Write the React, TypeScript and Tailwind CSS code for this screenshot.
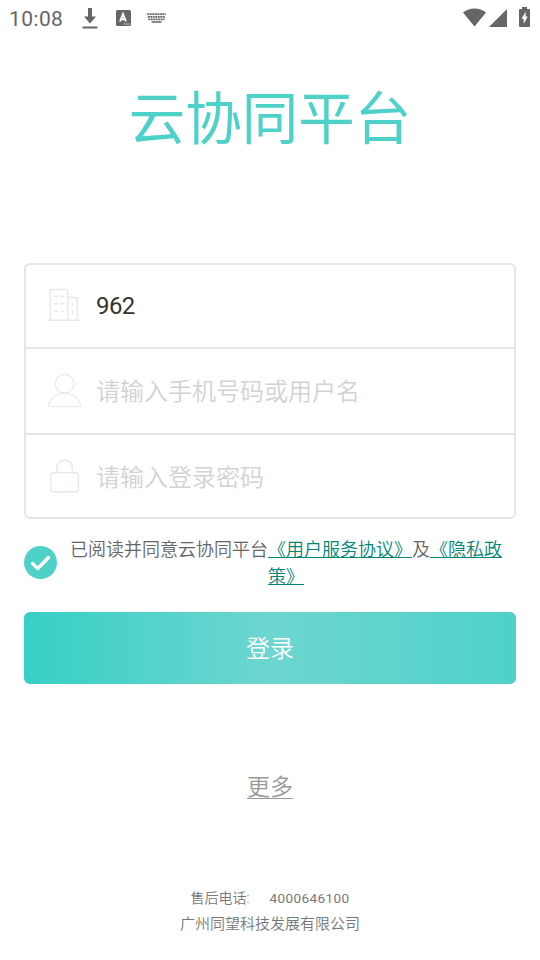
import type { ReactNode } from 'react';

function BuildingIcon() {
  return (
    <svg className="-ml-px mr-px -translate-y-px" width="34" height="34" viewBox="0 0 34 34" fill="none" stroke="#e4e9e9" strokeWidth="1.4">
      <path d="M3.2 32V3a1.5 1.5 0 0 1 1.5-1.5h14.6A1.5 1.5 0 0 1 20.8 3v29M20.8 9.5h8a1.5 1.5 0 0 1 1.5 1.5v21M0.8 32.2h32" />
      <path d="M7 8.3h4M13.5 8.3h4M7 15.7h4M13.5 15.7h4M7 23.3h4M13.5 23.3h4M25.5 14.5v4M25.5 22.500v4" />
    </svg>
  );
}

function UserIcon() {
  return (
    <svg width="34" height="34" viewBox="0 0 34 34" fill="none" stroke="#e4e9e9" strokeWidth="1.1">
      <circle cx="16.5" cy="9.8" r="9.3" />
      <path d="M0.5 32.5C1.5 24.500 8 19.300 16.500 19.300S31.500 24.500 32.700 32.500z" />
    </svg>
  );
}

function LockIcon() {
  return (
    <svg width="34" height="34" viewBox="0 0 34 34" fill="none" stroke="#e4e9e9" strokeWidth="1.4">
      <rect x="2.8" y="13.800" width="27.500" height="19" rx="2.500" />
      <path d="M8.800 13.800V9a7.800 7.800 0 0 1 15.600 0v4.800" />
    </svg>
  );
}

function StatusBar() {
  return (
    <div className="flex h-9 items-center pl-[9px] pr-2.5 text-[#666]">
      <span className="w-[73px] pt-0.5 text-[21px] leading-none tracking-[0.4px]">10:08</span>
      <svg className="mt-px" width="16" height="21" viewBox="0 0 16 21" fill="currentColor">
        <path d="M6 0h4v8.500h4L8 15.500 2 8.500h4zM0.500 18.500h15v2h-15z" />
      </svg>
      <svg className="ml-[18px]" width="15" height="16" viewBox="0 0 15 16">
        <rect width="15" height="16" rx="1.500" fill="currentColor" />
        <path d="M4 11.500 7 4l3 7.500M5.200 9.200h3.600" fill="none" stroke="#fff" strokeWidth="1.900" />
        <path d="M8 14h1.300M10.300 14h1.300M12.500 14h1.300" stroke="#fff" strokeWidth="1.200" />
      </svg>
      <svg className="ml-4" width="19" height="10" viewBox="0 0 19 10" fill="none" stroke="currentColor">
        <path d="M0.300 1.200h18.400M0.800 3.800h17.600M1.300 6.400h16.400" strokeWidth="1.800" strokeDasharray="1.900 0.600" />
        <path d="M4.500 9h10" strokeWidth="1.500" />
      </svg>
      <svg className="ml-auto -mt-px" width="23" height="19" viewBox="0 0 23 19" fill="currentColor">
        <path d="M0 4.500C6.500-1 16.500-1 23 4.500L11.500 18.500z" />
      </svg>
      <svg className="ml-[3px]" width="18" height="18" viewBox="0 0 18 18" fill="currentColor">
        <path d="M18 0v18H0z" />
      </svg>
      <svg className="ml-3 -mt-0.5" width="11" height="20" viewBox="0 0 11 20">
        <path d="M3 0h5v2h2a1 1 0 0 1 1 1v16a1 1 0 0 1-1 1H1a1 1 0 0 1-1-1V3a1 1 0 0 1 1-1h2z" fill="currentColor" />
        <path d="M6.800 4.500 2.500 11.800h2.200v5l4-7.300H6.500z" fill="#fff" />
      </svg>
    </div>
  );
}

function Field({ icon, children }: { icon: ReactNode; children: ReactNode }) {
  return (
    <div className="flex h-full items-center gap-3.5 pl-[22px] text-2xl">
      {icon}
      {children}
    </div>
  );
}

export default function App() {
  return (
    <div className="flex h-[960px] w-[540px] flex-col bg-white font-['Roboto','Noto_Sans_CJK_SC',sans-serif]">
      <StatusBar />

      <h1 className="mt-[42px] text-center text-[56.5px] leading-[84px] text-[#4ed1c9]">云协同平台</h1>

      <main className="mt-[101px] px-6">
        <div className="h-64 rounded-md border-2 border-[#e4e7e7]">
          <div className="h-[82px]">
            <Field icon={<BuildingIcon />}>
              <span className="tracking-[-0.6px] text-[#333]">962</span>
            </Field>
          </div>
          <div className="h-[88px] border-y-2 border-[#e4e7e7]">
            <Field icon={<UserIcon />}>
              <span className="pt-0.5 font-[350] text-[#d2d2d2]">请输入手机号码或用户名</span>
            </Field>
          </div>
          <div className="h-[82px]">
            <Field icon={<LockIcon />}>
              <span className="pt-1 font-[350] text-[#d2d2d2]">请输入登录密码</span>
            </Field>
          </div>
        </div>

        {/* Agreement */}
        <div className="mt-4 flex h-[54px] items-center">
          <svg className="shrink-0" width="33" height="33" viewBox="0 0 33 33">
            <circle cx="16.500" cy="16.500" r="16.500" fill="#4ed1c9" />
            <path d="m8.500 17.500 5.300 5 10.700-11" fill="none" stroke="#fff" strokeWidth="3.500" strokeLinecap="round" strokeLinejoin="round" />
          </svg>
          <p className="flex-1 pr-px pt-0.5 text-center text-lg leading-[27px] font-[350] text-[#666]">
            已阅读并同意云协同平台
            <a className="text-[#008577] underline decoration-1 underline-offset-1">《用户服务协议》</a>
            及
            <a className="text-[#008577] underline decoration-1 underline-offset-1">《隐私政<br />策》</a>
          </p>
        </div>

        <button className="mt-[23px] block h-[72px] w-full rounded-md bg-linear-[to_right,#37cfc6,#6dd6d0_50%,#4ed1c9] pt-0.5 text-2xl font-[350] text-white">
          登录
        </button>
      </main>

      <a className="mt-[86px] self-center text-[23px] leading-9 font-[350] text-[#999] underline decoration-1 underline-offset-3">更多</a>

      <footer className="mt-[79px] text-center text-[#777]">
        <p className="flex justify-center gap-5 text-sm leading-[26px]">
          <span className="font-[350]">售后电话:</span>
          <span className="text-[13.5px] tracking-[0.4px]">4000646100</span>
        </p>
        <p className="text-[15px] leading-[26px] font-[350]">广州同望科技发展有限公司</p>
      </footer>
    </div>
  );
}
